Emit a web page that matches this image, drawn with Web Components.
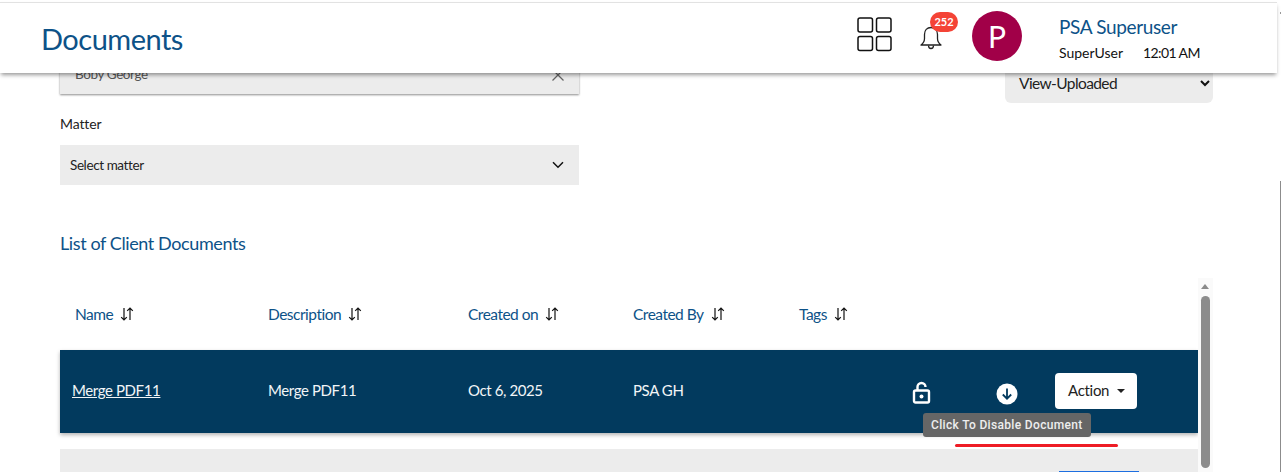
<!DOCTYPE html>
<html>
<head>
<meta charset="utf-8">
<title>Documents</title>
<style>
  html, body { margin: 0; height: 472px; overflow: hidden; background: #fff; }
  body { font-family: 'Lato', 'Open Sans', sans-serif; }
</style>
</head>
<body>
<app-header></app-header>
<doc-page></doc-page>

<script>
class AppHeader extends HTMLElement {
  constructor() {
    super();
    this.shadowDOM = this.attachShadow({ mode: 'open' });
  }

  connectedCallback() {
    this.shadowDOM.innerHTML = `
      <style>
        :host {
          display: flex;
          align-items: center;
          position: relative;
          z-index: 5;
          box-sizing: border-box;
          height: 71px;
          margin: 2px 4px 0 0;
          padding: 0 0 0 41px;
          background: #fff;
          border-top: 1px solid #e2e2e2;
          box-shadow: 0 3px 4px -1px rgba(0, 0, 0, .4);
        }
        :host::after {
          content: '';
          position: absolute;
          right: -4px;
          top: 9px;
          width: 1px;
          height: 2px;
          background: #999;
        }
        h1 {
          margin: 0;
          flex: 1;
          font: 400 29px 'Lato', sans-serif;
          letter-spacing: -.5px;
          color: #0d5288;
        }
        .apps { display: block; margin: 0 23px 8px 0; }
        .bell { position: relative; width: 46px; height: 40px; margin: 0 10px 12px 0; }
        .bell svg { position: absolute; left: 3px; top: 13px; }
        .badge {
          position: absolute;
          left: 14px;
          top: 0;
          width: 28px;
          height: 20px;
          border-radius: 10px;
          background: #f44336;
          color: #fff;
          font: 700 11px/20px 'Lato', sans-serif;
          text-align: center;
        }
        .avatar {
          width: 50px;
          height: 50px;
          border-radius: 50%;
          background: #a10048;
          color: #fff;
          font: 400 30px/50px 'Lato', sans-serif;
          text-align: center;
          margin: 0 37px 4px 0;
        }
        .user { width: 218px; }
        .name { font: 400 19px/22px 'Lato', sans-serif; letter-spacing: -.35px; color: #0d5288; }
        .meta {
          display: flex;
          gap: 20px;
          margin-top: 7px;
          font: 400 14px/16px 'Lato', sans-serif;
          color: #111;
        }
        .time { letter-spacing: -.6px; }
      </style>
      <h1>Documents</h1>
      <svg class="apps" width="36" height="35" viewBox="0 0 36 35" fill="none" stroke="#111" stroke-width="1.500">
        <rect x="1" y="1" width="14.500" height="14" rx="2"/>
        <rect x="19.500" y="1" width="14.500" height="14" rx="2"/>
        <rect x="1" y="19.500" width="14.500" height="14" rx="2"/>
        <rect x="19.500" y="19.500" width="14.500" height="14" rx="2"/>
      </svg>
      <div class="bell">
        <svg width="24" height="26" viewBox="0 0 24 26" fill="none" stroke="#222" stroke-width="1.300" stroke-linejoin="round">
          <path d="M12 2.500c-4 0-6.500 3-6.500 7v4c0 3-1.500 5-3.500 6.500h20c-2-1.500-3.500-3.500-3.500-6.500v-4c0-4-2.500-7-6.500-7z"/>
          <path d="M9.500 20.500c0 1.800 1.100 3 2.500 3s2.500-1.200 2.500-3"/>
        </svg>
        <span class="badge">252</span>
      </div>
      <div class="avatar">P</div>
      <div class="user">
        <div class="name">PSA Superuser</div>
        <div class="meta"><span>SuperUser</span><span class="time">12:01 AM</span></div>
      </div>
    `;
  }
}

class SelectField extends HTMLElement {
  constructor() {
    super();
    this.shadowDOM = this.attachShadow({ mode: 'open' });
  }

  connectedCallback() {
    this.shadowDOM.innerHTML = `
      <style>
        :host {
          display: flex;
          align-items: center;
          justify-content: space-between;
          box-sizing: border-box;
          background: #ececec;
          color: #222;
          font: 400 13.5px 'Lato', sans-serif;
          letter-spacing: -.4px;
        }
      </style>
      <slot></slot>
      <slot name="icon"></slot>
    `;
  }
}

class SortHead extends HTMLElement {
  constructor() {
    super();
    this.shadowDOM = this.attachShadow({ mode: 'open' });
  }

  connectedCallback() {
    this.shadowDOM.innerHTML = `
      <style>
        :host {
          display: flex;
          align-items: center;
          gap: 7px;
          color: #0d5288;
          font: 400 15.5px 'Lato', sans-serif;
          letter-spacing: -.5px;
        }
      </style>
      <slot></slot>
      <svg width="14" height="14" viewBox="0 0 14 14" fill="none" stroke="#111" stroke-width="1.200">
        <path d="M4 1v12M1.200 10.200 4 13l2.800-2.800"/>
        <path d="M10 13V1M7.200 3.800 10 1l2.800 2.800"/>
      </svg>
    `;
  }
}

class DocRow extends HTMLElement {
  constructor() {
    super();
    this.shadowDOM = this.attachShadow({ mode: 'open' });
  }

  connectedCallback() {
    this.shadowDOM.innerHTML = `
      <style>
        :host {
          display: flex;
          align-items: center;
          position: relative;
          box-sizing: border-box;
          height: 83px;
          padding-left: 12px;
          background: #023a5e;
          color: #f2f5f7;
          font: 400 15px 'Lato', sans-serif;
          letter-spacing: -.4px;
          box-shadow: 0 2px 4px rgba(0, 0, 0, .3);
        }
        span, a { display: block; position: relative; top: -2px; }
        a { color: inherit; width: 196px; }
        a b { font-weight: 400; text-decoration: underline; }
        .desc { width: 200px; }
        .date { width: 165px; }
        .by { width: 279px; }
        .lock { display: block; margin-right: 64px; position: relative; top: 1px; }
        .down { display: block; margin-right: 37px; position: relative; top: 2px; }
        button {
          width: 82px;
          height: 36px;
          border: 0;
          border-radius: 4px;
          background: #fff;
          color: #222;
          font: 400 15px 'Lato', sans-serif;
          letter-spacing: -.3px;
          position: relative;
          top: -1px;
          padding: 0 0 2px 13px;
          text-align: left;
        }
        button::after {
          content: '';
          display: inline-block;
          margin-left: 8px;
          vertical-align: 3px;
          border-top: 4px solid #222;
          border-left: 4px solid transparent;
          border-right: 4px solid transparent;
        }
        .tip {
          position: absolute;
          left: 863px;
          top: 63px;
          padding: 0 8px;
          height: 24px;
          border-radius: 3px;
          background: #666;
          color: #eee;
          font: 500 12px/24px 'Roboto', sans-serif;
          letter-spacing: .33px;
          white-space: nowrap;
        }
      </style>
      <a href="#"><b>Merge PDF11</b></a>
      <span class="desc">Merge PDF11</span>
      <span class="date">Oct 6, 2025</span>
      <span class="by">PSA GH</span>
      <svg class="lock" width="20" height="24" viewBox="0 0 20 24" fill="none" stroke="#fff" stroke-width="2.400">
        <rect x="2" y="9.500" width="15" height="12" rx="1.500"/>
        <path d="M5.500 9.500V6a4 4 0 0 1 8 0"/>
        <circle cx="9.500" cy="15.500" r="2" fill="#fff" stroke="none"/>
      </svg>
      <svg class="down" width="22" height="22" viewBox="0 0 22 22">
        <circle cx="11" cy="11" r="10.500" fill="#fff"/>
        <path d="M11 5.500v10M6.800 11.500l4.200 4.200 4.200-4.200" fill="none" stroke="#023a5e" stroke-width="1.800"/>
      </svg>
      <button>Action</button>
      <div class="tip">Click To Disable Document</div>
    `;
  }
}

class DocPage extends HTMLElement {
  constructor() {
    super();
    this.shadowDOM = this.attachShadow({ mode: 'open' });
  }

  connectedCallback() {
    this.shadowDOM.innerHTML = `
      <style>
        :host {
          display: block;
          position: relative;
          height: 399px;
          padding: 0 60px;
          overflow: hidden;
        }
        .top { display: flex; justify-content: space-between; margin-top: -10px; }
        .left { width: 519px; }
        .client {
          height: 31px;
          padding: 0 15px 0 15px;
          box-shadow: 0 1px 2px rgba(0, 0, 0, .45);
          color: #555;
        }
        .client span { position: relative; top: -5px; }
        .client svg { display: block; position: relative; top: -4px; }
        .label { margin: 21px 0 13px; font: 400 14px/17px 'Lato', sans-serif; letter-spacing: -.1px; color: #222; }
        .matter { height: 40px; padding: 0 15px 0 10px; }
        .view {
          width: 208px;
          height: 40px;
          margin: 0 8px 0 0;
          padding: 0 3px 0 14px;
          border-radius: 0 0 6px 6px;
          font-size: 15.5px;
          letter-spacing: -.6px;
        }
        h2 {
          margin: 47px 0 0;
          font: 400 18px/22px 'Lato', sans-serif;
          letter-spacing: -.4px;
          color: #0d5288;
        }
        .heads {
          display: grid;
          grid-template-columns: 193px 200px 165px 166px 1fr;
          margin: 41px 0 0;
          padding: 0 15px;
          height: 37px;
          align-items: center;
          width: 1108px;
        }
        doc-row { width: 1138px; margin-top: 18px; }
        .next { width: 1138px; height: 23px; margin-top: 16px; padding-top: 22px; box-sizing: border-box; background: #ececec; }
        .next i {
          display: block;
          width: 80px;
          height: 1px;
          margin-left: 999px;
          background: #1d6ee0;
        }
        .red {
          position: absolute;
          left: 955px;
          top: 371px;
          width: 163px;
          height: 3px;
          border-radius: 2px;
          background: #ee1c25;
        }
        .track { position: absolute; left: 1198px; top: 205px; width: 15px; height: 194px; background: #fafafa; }
        .arrow {
          position: absolute;
          left: 3px;
          top: 6px;
          border-bottom: 5px solid #8a8a8a;
          border-left: 4.500px solid transparent;
          border-right: 4.500px solid transparent;
        }
        .thumb { position: absolute; left: 3px; top: 18px; width: 9px; height: 172px; border-radius: 5px; background: #8c8c8c; }
        .outer { position: absolute; right: 0; top: 108px; width: 1px; height: 291px; background: #8c8c8c; }
      </style>
      <div class="top">
        <div class="left">
          <select-field class="client">
            <span>Boby George</span>
            <svg slot="icon" width="12" height="12" viewBox="0 0 12 12" fill="none" stroke="#666" stroke-width="1.300"><path d="M.5.5l11 11M11.500.5l-11 11"/></svg>
          </select-field>
          <div class="label">Matter</div>
          <select-field class="matter">
            <span>Select matter</span>
            <svg slot="icon" width="12" height="8" viewBox="0 0 12 8" fill="none" stroke="#111" stroke-width="1.500"><path d="M1 1.200l5 5 5-5"/></svg>
          </select-field>
        </div>
        <select-field class="view">
          <span>View-Uploaded</span>
          <svg slot="icon" width="10" height="7" viewBox="0 0 10 7" fill="none" stroke="#111" stroke-width="2"><path d="M1 1l4 4 4-4"/></svg>
        </select-field>
      </div>
      <h2>List of Client Documents</h2>
      <div class="heads">
        <sort-head>Name</sort-head>
        <sort-head>Description</sort-head>
        <sort-head>Created on</sort-head>
        <sort-head>Created By</sort-head>
        <sort-head>Tags</sort-head>
      </div>
      <doc-row></doc-row>
      <div class="next"><i></i></div>
      <div class="red"></div>
      <div class="track"><div class="arrow"></div><div class="thumb"></div></div>
      <div class="outer"></div>
    `;
  }
}

customElements.define('app-header', AppHeader);
customElements.define('select-field', SelectField);
customElements.define('sort-head', SortHead);
customElements.define('doc-row', DocRow);
customElements.define('doc-page', DocPage);
</script>
</body>
</html>
